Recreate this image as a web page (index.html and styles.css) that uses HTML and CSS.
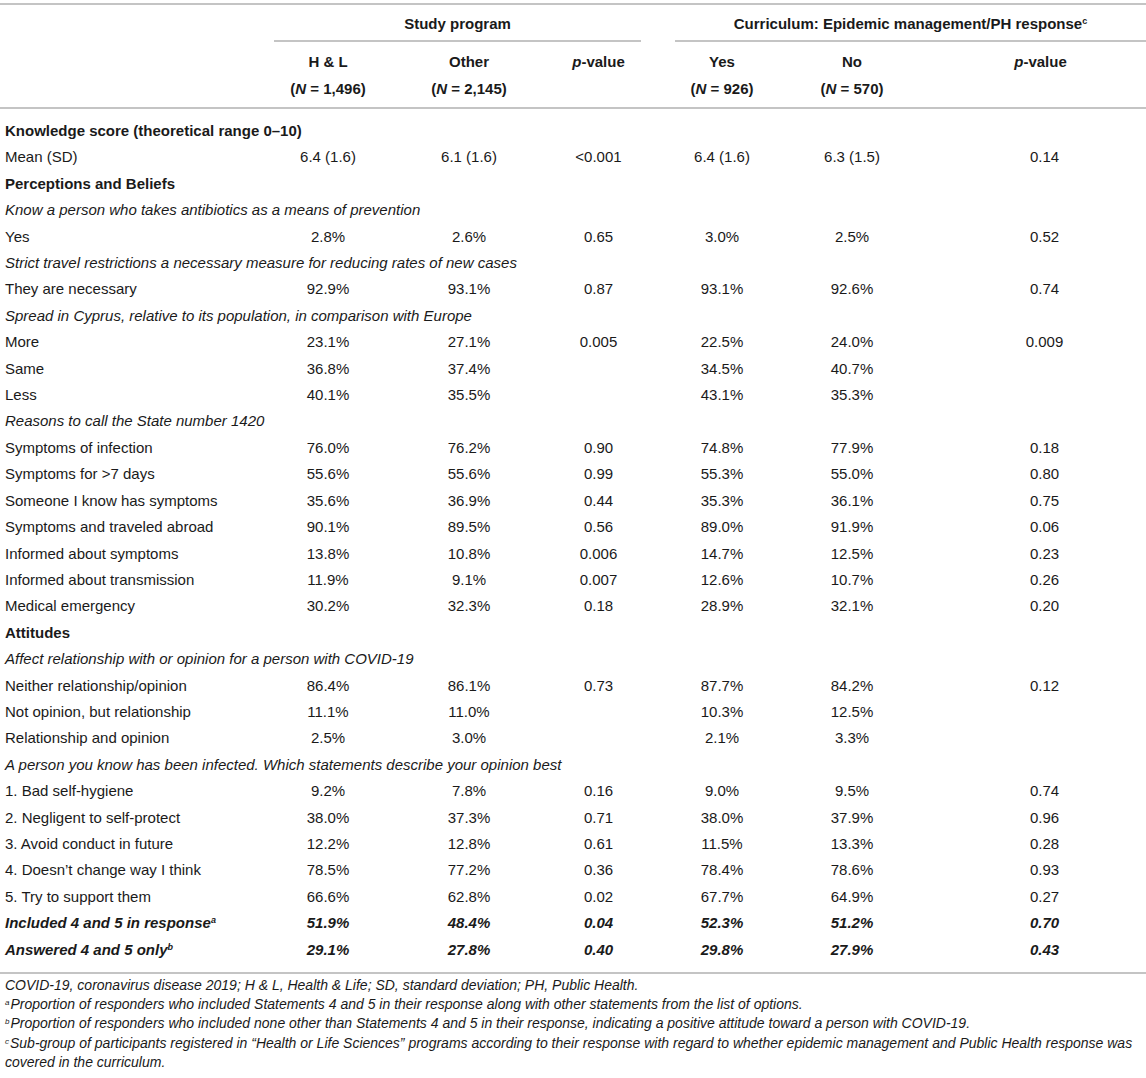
FILE: index.html
```html
<!DOCTYPE html>
<html lang="en">
<head>
   <meta charset="UTF-8">
   <meta name="viewport" content="width=device-width, initial-scale=1.0">
   <title>Table</title>
   <link rel="stylesheet" href="styles.css">
</head>
<body>
   <table class="results">
      <colgroup>
         <col class="c-label">
         <col class="c-hl">
         <col class="c-other">
         <col class="c-p">
         <col class="c-gap">
         <col class="c-yes">
         <col class="c-no">
         <col class="c-p2">
      </colgroup>
      <thead>
         <tr class="groups">
            <th></th>
            <th colspan="3" class="group">Study program</th>
            <th></th>
            <th colspan="3" class="group">Curriculum: Epidemic management/PH response<sup>c</sup></th>
         </tr>
         <tr class="cols">
            <th></th>
            <th>H &amp; L<br>(<i>N</i> = 1,496)</th>
            <th>Other<br>(<i>N</i> = 2,145)</th>
            <th><i>p</i>-value<br>&nbsp;</th>
            <th></th>
            <th>Yes<br>(<i>N</i> = 926)</th>
            <th>No<br>(<i>N</i> = 570)</th>
            <th class="p2"><i>p</i>-value<br>&nbsp;</th>
         </tr>
      </thead>
      <tbody>
         <tr class="section first"><td colspan="8">Knowledge score (theoretical range 0–10)</td></tr>
         <tr><td>Mean (SD)</td><td>6.4 (1.6)</td><td>6.1 (1.6)</td><td>&lt;0.001</td><td></td><td>6.4 (1.6)</td><td>6.3 (1.5)</td><td class="p2">0.14</td></tr>
         <tr class="section"><td colspan="8">Perceptions and Beliefs</td></tr>
         <tr class="question"><td colspan="8">Know a person who takes antibiotics as a means of prevention</td></tr>
         <tr><td>Yes</td><td>2.8%</td><td>2.6%</td><td>0.65</td><td></td><td>3.0%</td><td>2.5%</td><td class="p2">0.52</td></tr>
         <tr class="question"><td colspan="8">Strict travel restrictions a necessary measure for reducing rates of new cases</td></tr>
         <tr><td>They are necessary</td><td>92.9%</td><td>93.1%</td><td>0.87</td><td></td><td>93.1%</td><td>92.6%</td><td class="p2">0.74</td></tr>
         <tr class="question"><td colspan="8">Spread in Cyprus, relative to its population, in comparison with Europe</td></tr>
         <tr><td>More</td><td>23.1%</td><td>27.1%</td><td>0.005</td><td></td><td>22.5%</td><td>24.0%</td><td class="p2">0.009</td></tr>
         <tr><td>Same</td><td>36.8%</td><td>37.4%</td><td></td><td></td><td>34.5%</td><td>40.7%</td><td class="p2"></td></tr>
         <tr><td>Less</td><td>40.1%</td><td>35.5%</td><td></td><td></td><td>43.1%</td><td>35.3%</td><td class="p2"></td></tr>
         <tr class="question"><td colspan="8">Reasons to call the State number 1420</td></tr>
         <tr><td>Symptoms of infection</td><td>76.0%</td><td>76.2%</td><td>0.90</td><td></td><td>74.8%</td><td>77.9%</td><td class="p2">0.18</td></tr>
         <tr><td>Symptoms for &gt;7 days</td><td>55.6%</td><td>55.6%</td><td>0.99</td><td></td><td>55.3%</td><td>55.0%</td><td class="p2">0.80</td></tr>
         <tr><td>Someone I know has symptoms</td><td>35.6%</td><td>36.9%</td><td>0.44</td><td></td><td>35.3%</td><td>36.1%</td><td class="p2">0.75</td></tr>
         <tr><td>Symptoms and traveled abroad</td><td>90.1%</td><td>89.5%</td><td>0.56</td><td></td><td>89.0%</td><td>91.9%</td><td class="p2">0.06</td></tr>
         <tr><td>Informed about symptoms</td><td>13.8%</td><td>10.8%</td><td>0.006</td><td></td><td>14.7%</td><td>12.5%</td><td class="p2">0.23</td></tr>
         <tr><td>Informed about transmission</td><td>11.9%</td><td>9.1%</td><td>0.007</td><td></td><td>12.6%</td><td>10.7%</td><td class="p2">0.26</td></tr>
         <tr><td>Medical emergency</td><td>30.2%</td><td>32.3%</td><td>0.18</td><td></td><td>28.9%</td><td>32.1%</td><td class="p2">0.20</td></tr>
         <tr class="section"><td colspan="8">Attitudes</td></tr>
         <tr class="question"><td colspan="8">Affect relationship with or opinion for a person with COVID-19</td></tr>
         <tr><td>Neither relationship/opinion</td><td>86.4%</td><td>86.1%</td><td>0.73</td><td></td><td>87.7%</td><td>84.2%</td><td class="p2">0.12</td></tr>
         <tr><td>Not opinion, but relationship</td><td>11.1%</td><td>11.0%</td><td></td><td></td><td>10.3%</td><td>12.5%</td><td class="p2"></td></tr>
         <tr><td>Relationship and opinion</td><td>2.5%</td><td>3.0%</td><td></td><td></td><td>2.1%</td><td>3.3%</td><td class="p2"></td></tr>
         <tr class="question"><td colspan="8">A person you know has been infected. Which statements describe your opinion best</td></tr>
         <tr><td>1. Bad self-hygiene</td><td>9.2%</td><td>7.8%</td><td>0.16</td><td></td><td>9.0%</td><td>9.5%</td><td class="p2">0.74</td></tr>
         <tr><td>2. Negligent to self-protect</td><td>38.0%</td><td>37.3%</td><td>0.71</td><td></td><td>38.0%</td><td>37.9%</td><td class="p2">0.96</td></tr>
         <tr><td>3. Avoid conduct in future</td><td>12.2%</td><td>12.8%</td><td>0.61</td><td></td><td>11.5%</td><td>13.3%</td><td class="p2">0.28</td></tr>
         <tr><td>4. Doesn’t change way I think</td><td>78.5%</td><td>77.2%</td><td>0.36</td><td></td><td>78.4%</td><td>78.6%</td><td class="p2">0.93</td></tr>
         <tr><td>5. Try to support them</td><td>66.6%</td><td>62.8%</td><td>0.02</td><td></td><td>67.7%</td><td>64.9%</td><td class="p2">0.27</td></tr>
         <tr class="strong"><td>Included 4 and 5 in response<sup>a</sup></td><td>51.9%</td><td>48.4%</td><td>0.04</td><td></td><td>52.3%</td><td>51.2%</td><td class="p2">0.70</td></tr>
         <tr class="strong last"><td>Answered 4 and 5 only<sup>b</sup></td><td>29.1%</td><td>27.8%</td><td>0.40</td><td></td><td>29.8%</td><td>27.9%</td><td class="p2">0.43</td></tr>
      </tbody>
   </table>

   <div class="notes">
      <p>COVID-19, coronavirus disease 2019; H &amp; L, Health &amp; Life; SD, standard deviation; PH, Public Health.</p>
      <p><sup>a</sup>Proportion of responders who included Statements 4 and 5 in their response along with other statements from the list of options.</p>
      <p><sup>b</sup>Proportion of responders who included none other than Statements 4 and 5 in their response, indicating a positive attitude toward a person with COVID-19.</p>
      <p><sup>c</sup>Sub-group of participants registered in “Health or Life Sciences” programs according to their response with regard to whether epidemic management and Public Health response was<br>covered in the curriculum.</p>
   </div>
</body>
</html>
```

FILE: styles.css
```css
*{
   margin: 0;
   padding: 0;
   box-sizing: border-box;
}

body{
   font-family: "Liberation Sans", Arial, sans-serif;
   color: #1a1a1a;
   background: #fff;
}

sup{
   font-size: 9px;
   line-height: 0;
   vertical-align: 5px;
}

.results{
   width: 1146px;
   margin-top: 3px;
   table-layout: fixed;
   border-collapse: separate;
   border-spacing: 0;
   border-top: 2px solid #c4c4c4;
   border-bottom: 2px solid #c4c4c4;
   font-size: 15px;
}

.c-label{ width: 274px; }
.c-hl{ width: 108px; }
.c-other{ width: 174px; }
.c-p{ width: 85px; }
.c-gap{ width: 34px; }
.c-yes{ width: 94px; }
.c-no{ width: 166px; }
.c-p2{ width: 211px; }

th{
   font-weight: bold;
   text-align: center;
   white-space: nowrap;
}

.groups th{
   padding: 9px 0 6px;
   line-height: 20px;
}

.groups .group{
   border-bottom: 2px solid #c4c4c4;
}

.cols th{
   padding: 6px 0 5px;
   line-height: 27px;
   border-bottom: 2px solid #c4c4c4;
}

td{
   line-height: 26.4px;
   padding: 0;
   text-align: center;
   white-space: nowrap;
}

td:first-child{
   text-align: left;
   padding-left: 5px;
}

td.p2{
   padding-left: 8px;
}

.section td{
   font-weight: bold;
}

.question td{
   font-style: italic;
}

.strong td{
   font-weight: bold;
   font-style: italic;
}

.first td{
   padding-top: 9px;
}

.last td{
   padding-bottom: 9px;
}

.notes{
   padding: 2px 5px 0;
   font-size: 14px;
   font-style: italic;
   line-height: 19.2px;
}

.notes sup{
   font-size: 8px;
   vertical-align: 4px;
   margin-right: 1px;
}
```
